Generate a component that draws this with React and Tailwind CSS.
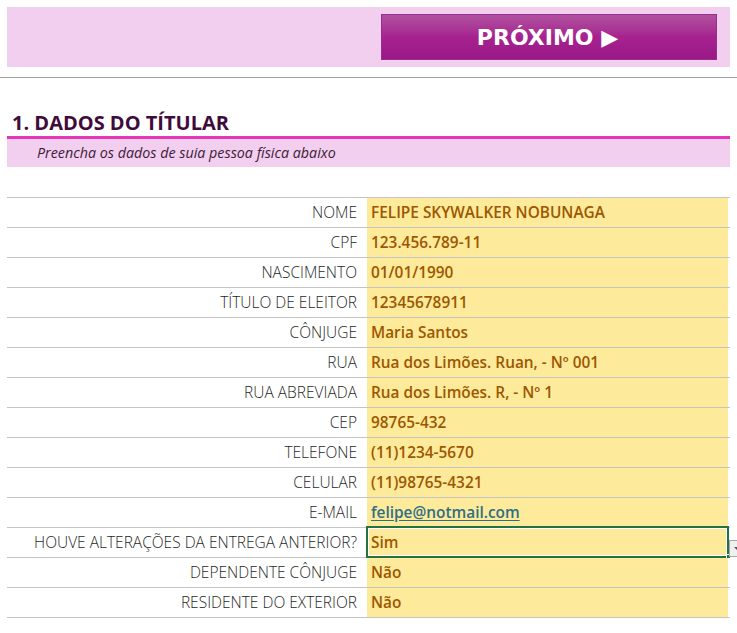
import React from "react";

const rows = [
  ["NOME", "FELIPE SKYWALKER NOBUNAGA"],
  ["CPF", "123.456.789-11"],
  ["NASCIMENTO", "01/01/1990"],
  ["TÍTULO DE ELEITOR", "12345678911"],
  ["CÔNJUGE", "Maria Santos"],
  ["RUA", "Rua dos Limões. Ruan, - Nº 001"],
  ["RUA ABREVIADA", "Rua dos Limões. R, - Nº 1"],
  ["CEP", "98765-432"],
  ["TELEFONE", "(11)1234-5670"],
  ["CELULAR", "(11)98765-4321"],
  ["E-MAIL", "felipe@notmail.com", "email"],
  ["HOUVE ALTERAÇÕES DA ENTREGA ANTERIOR?", "Sim", "sel"],
  ["DEPENDENTE CÔNJUGE", "Não"],
  ["RESIDENTE DO EXTERIOR", "Não"],
];

export default function App() {
  return (
    <div className="w-[737px] h-[633px] bg-white overflow-hidden" style={{ fontFamily: '"Open Sans", sans-serif' }}>
      <div className="pt-[7px] px-[7px]">
        <div className="h-[60px] bg-[#f2cfee] flex justify-end pt-[7px] pr-[13px]">
          <div className="w-[336px] h-[46px] border border-[#9a2c8c] bg-gradient-to-b from-[#b0509f] via-[#a5228f] to-[#9a1987] flex items-center justify-center pt-[1px] pr-[3px]">
            <span className="text-white text-[22px] font-bold" style={{ fontFamily: '"DejaVu Sans", sans-serif' }}>PRÓXIMO ▶</span>
          </div>
        </div>
      </div>
      <div className="mt-[10px] border-t border-[#a0a0a0]"></div>
      <div className="px-[7px] pt-[31px]">
        <div className="h-[27px] pl-[5px] pb-[1px] flex items-end">
          <span className="text-[20px] font-bold text-[#3f0b3b] leading-[24px]">1. DADOS DO TÍTULAR</span>
        </div>
        <div className="h-[3px] bg-[#e536b6]"></div>
        <div className="h-[28px] bg-[#f2cfee] pl-[30px] flex items-center">
          <span className="italic text-[14.3px] text-[#3d1b3a]">Preencha os dados de suia pessoa física abaixo</span>
        </div>
        <div className="mt-[30px] border-t border-[#c4c4c4]">
          {rows.map(([label, value, kind]) => (
            <div key={label} className="h-[30px] flex border-b border-[#c4c4c4] relative">
              <div className="w-[360px] flex items-center justify-end pr-[10px] text-[15.5px] font-light text-[#1f1f1f]">
                {label}
              </div>
              <div className="w-[361px] bg-[#feea9b] flex items-center pl-[4px] text-[15.4px] font-semibold text-[#9c5700]">
                {kind === "email" ? (
                  <span className="text-[#2e6f85] underline underline-offset-2">{value}</span>
                ) : (
                  value
                )}
              </div>
              {kind === "sel" && (
                <>
                  <div className="absolute left-[359px] top-[-2px] w-[363px] h-[32px] border-2 border-[#217346]">
                    <div className="absolute inset-0 border border-white"></div>
                  </div>
                  <div className="absolute left-[719px] top-[26px] w-[5px] h-[5px] bg-[#217346] border border-white"></div>
                  <div className="absolute left-[722px] top-[12px] w-[16px] h-[17px] bg-[#f0f0f0] border border-[#a8a8a8] flex items-center justify-center">
                    <div className="w-0 h-0 border-l-[3px] border-r-[3px] border-t-[3px] border-l-transparent border-r-transparent border-t-[#555]"></div>
                  </div>
                </>
              )}
            </div>
          ))}
        </div>
      </div>
    </div>
  );
}
